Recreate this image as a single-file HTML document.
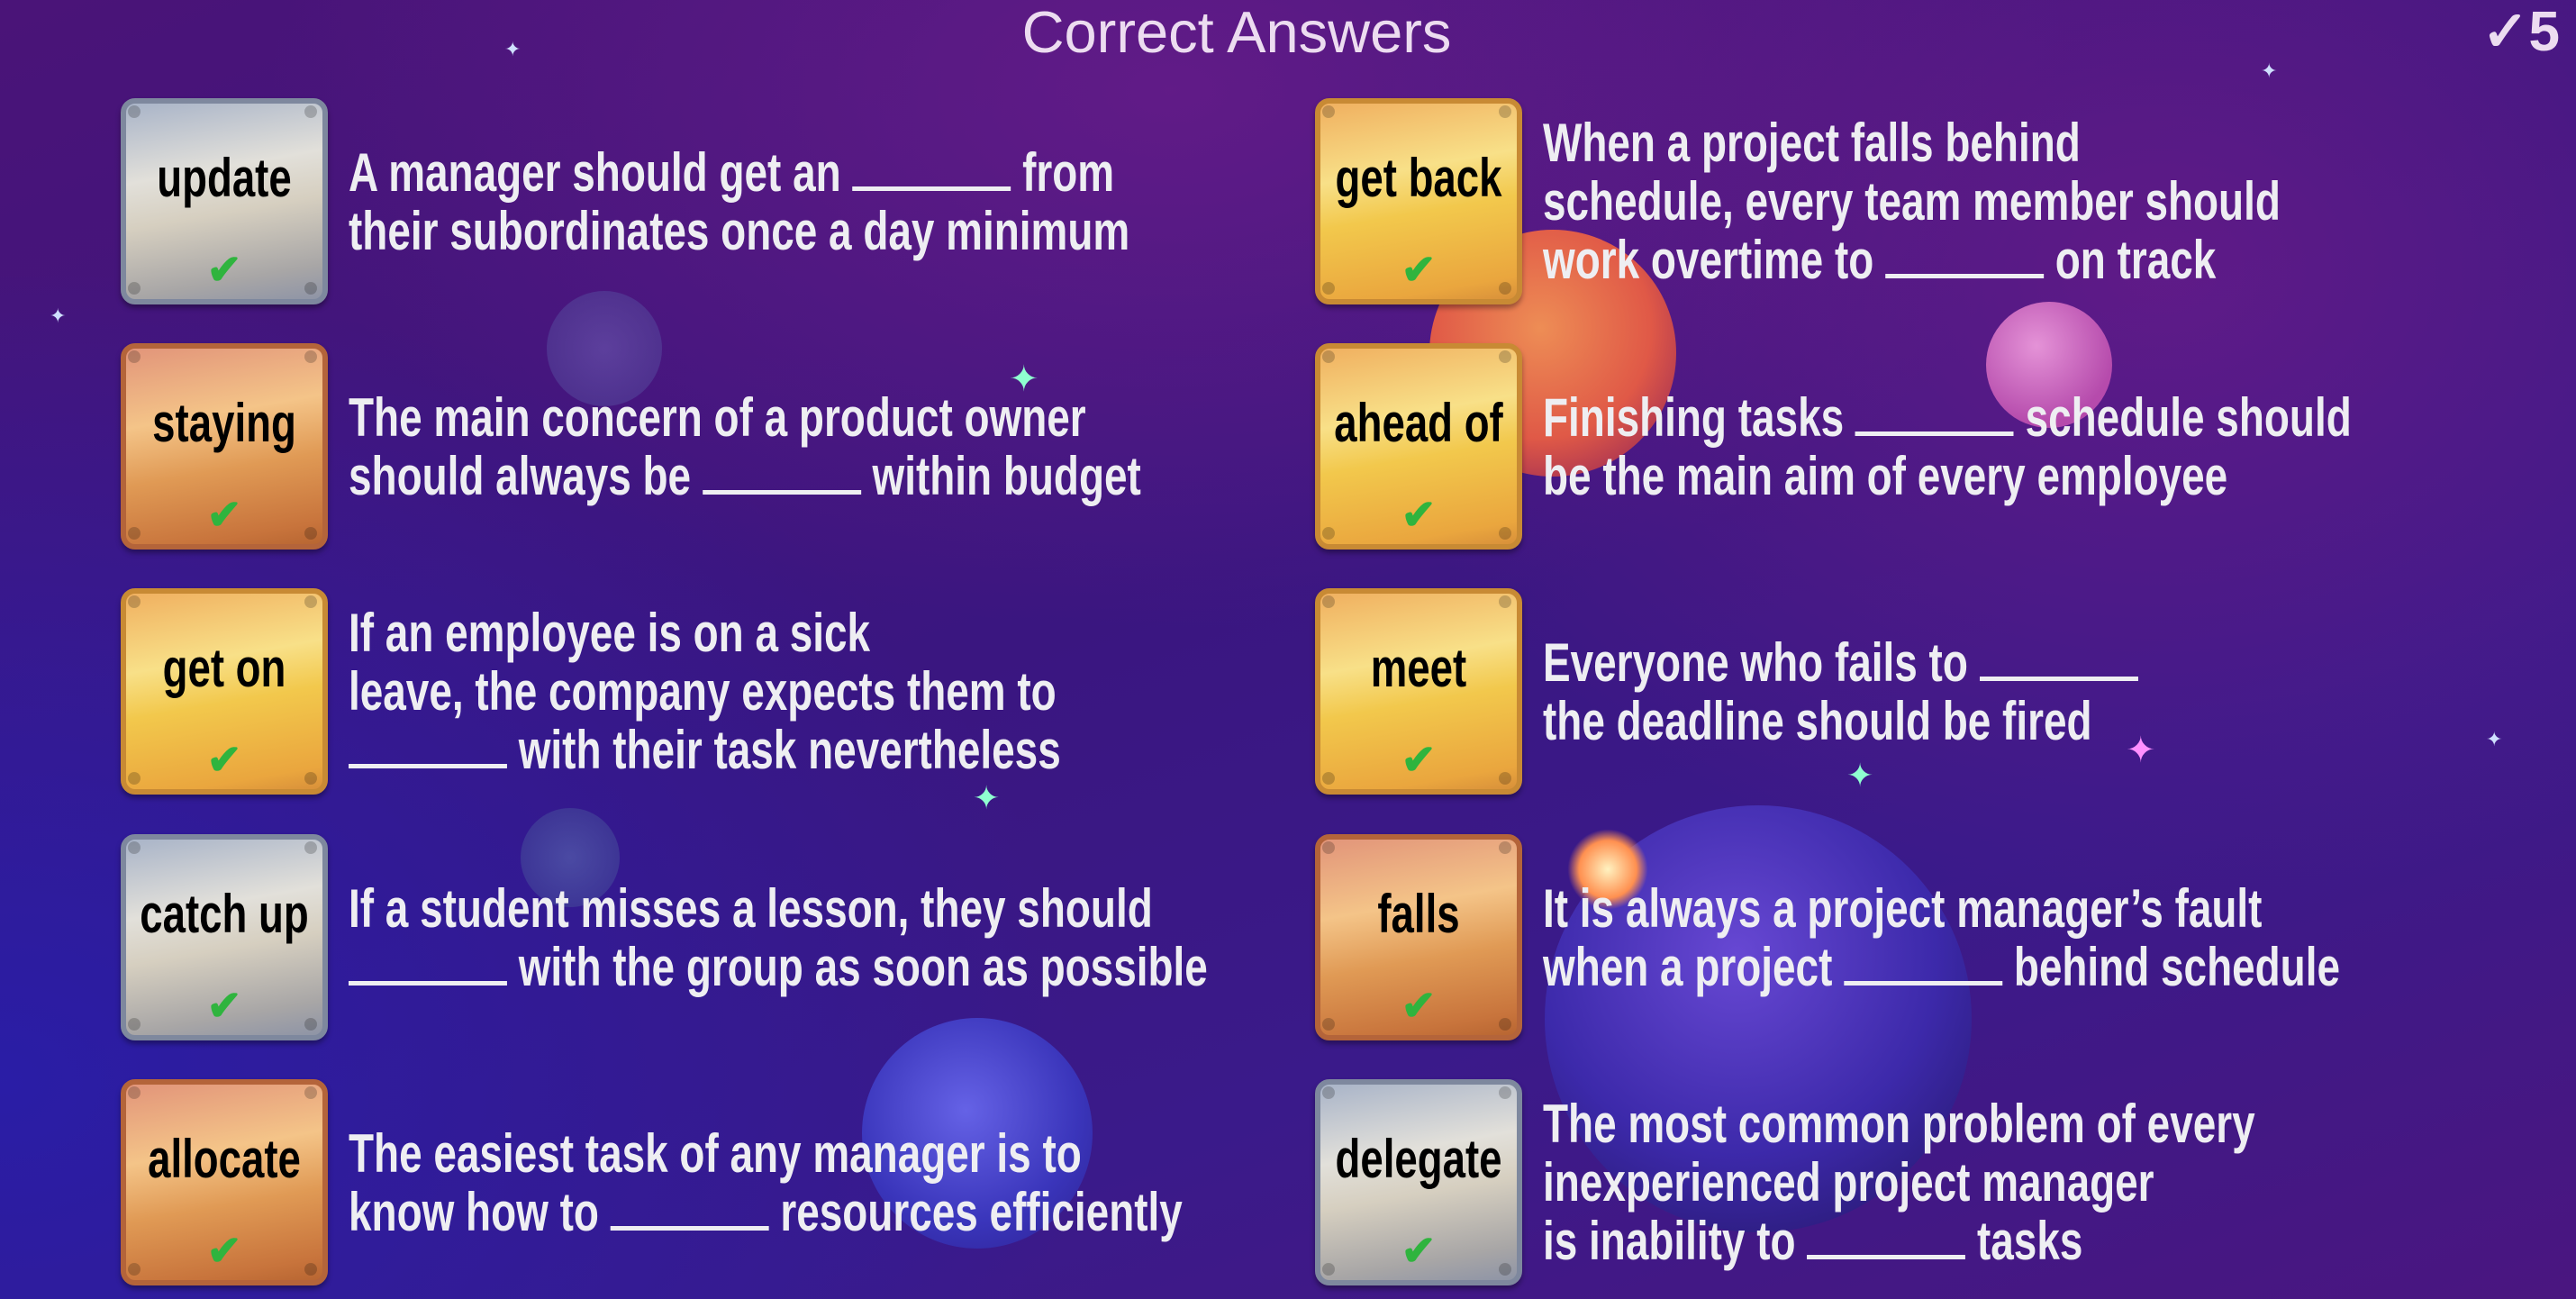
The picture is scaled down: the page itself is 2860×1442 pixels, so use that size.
<!DOCTYPE html>
<html><head><meta charset="utf-8"><style>
*{margin:0;padding:0;box-sizing:border-box}
body{width:2860px;height:1442px;overflow:hidden;position:relative;font-family:"Liberation Sans",sans-serif;
background:
radial-gradient(ellipse 900px 700px at 2400px 300px,rgba(120,30,140,.6),transparent),
radial-gradient(ellipse 1200px 900px at 0px 1200px,rgba(40,30,170,.9),transparent),
radial-gradient(ellipse 1000px 600px at 1300px 100px,rgba(110,30,140,.7),transparent),
linear-gradient(160deg,#4a1478 0%,#3a1680 45%,#3a1a8a 70%,#4a1680 100%);}
.pl{position:absolute;border-radius:50%}
.title{position:absolute;top:-2px;left:0;width:2746px;text-align:center;font-size:65px;color:#ecdcf0}
.score{position:absolute;top:-2px;right:18px;font-size:62px;font-weight:bold;color:#ecdcf0}
.card{position:absolute;width:230px;height:229px;border-radius:16px;border:6px solid;box-shadow:0 4px 6px rgba(0,0,0,.35)}
.card .w{position:absolute;top:48px;left:-40px;right:-40px;text-align:center;font-weight:bold;font-size:60px;color:#000;white-space:nowrap;transform:scaleX(.76)}
.card .c{position:absolute;bottom:10px;left:50%;transform:translateX(-50%);color:#2fb43e;font-size:46px;font-weight:bold;line-height:1}
.card:before{content:"";position:absolute;width:14px;height:14px;border-radius:50%;background:rgba(0,0,0,.2);top:2px;left:2px;box-shadow:196px 0 rgba(0,0,0,.2),0 196px rgba(0,0,0,.2),196px 196px rgba(0,0,0,.2)}
.g{background:linear-gradient(170deg,#a9b4c8 0%,#e2e0da 35%,#d6cfc0 55%,#a8a6a6 85%,#8e94a6 100%);border-color:#7e889e}
.o{background:linear-gradient(170deg,#e2957a 0%,#f4c488 35%,#e09a55 60%,#c8743c 90%,#b86632 100%);border-color:#b4643a}
.y{background:linear-gradient(170deg,#f0b060 0%,#f8e088 35%,#f2c84c 55%,#eaa63e 90%,#d8903a 100%);border-color:#c88a34}
.t{position:absolute;color:#eeeef2;font-weight:bold;font-size:60px;line-height:65px;display:flex;flex-direction:column;justify-content:center;height:229px;white-space:nowrap;transform:scaleX(.765);transform-origin:left center}
.b{display:inline-block;width:230px;border-bottom:5px solid #eeeef2;height:50px;vertical-align:baseline}
.st{position:absolute;color:#cfe0ff;font-size:22px}
</style></head><body>
<div class="pl" style="left:1715px;top:894px;width:474px;height:474px;background:radial-gradient(circle at 45% 35%,#6f50e0,#3c2cb0 55%,#2a1e80 80%);opacity:.85"></div>
<div class="pl" style="left:1587px;top:255px;width:274px;height:274px;background:radial-gradient(circle at 45% 40%,#ff9a50,#f06040 55%,#a02850 90%);opacity:.9"></div>
<div class="pl" style="left:2205px;top:335px;width:140px;height:140px;background:radial-gradient(circle at 40% 35%,#f4a0e0,#c050b0 70%);opacity:.9"></div>
<div class="pl" style="left:957px;top:1130px;width:256px;height:256px;background:radial-gradient(circle at 45% 40%,#6a6af0,#3a38c0 60%,#2a2090);opacity:.9"></div>
<div class="pl" style="left:607px;top:323px;width:128px;height:128px;background:radial-gradient(circle,#6a5ab0,#4a3a90);opacity:.6"></div>
<div class="pl" style="left:578px;top:897px;width:110px;height:110px;background:radial-gradient(circle,#5a6ab0,#3a3a90);opacity:.6"></div>
<div class="pl" style="left:1740px;top:920px;width:90px;height:90px;background:radial-gradient(circle,#fff2c0,#ff9050 50%,transparent 70%)"></div>
<div class="st" style="left:560px;top:42px">✦</div><div class="st" style="left:2510px;top:66px">✦</div><div class="st" style="left:1120px;top:398px;color:#8fffd0;font-size:40px">✦</div>
<div class="st" style="left:2360px;top:810px;color:#ff90ff;font-size:40px">✦</div><div class="st" style="left:2050px;top:840px;color:#8fffd0;font-size:36px">✦</div><div class="st" style="left:1080px;top:865px;color:#8fffd0;font-size:36px">✦</div>
<div class="st" style="left:2760px;top:808px">✦</div><div class="st" style="left:55px;top:338px">✦</div>
<div class="title">Correct Answers</div>
<div class="score">✓5</div>

<div class="card g" style="left:134px;top:109px"><div class="w">update</div><div class="c">✔</div></div>
<div class="t" style="left:387px;top:109px"><div>A manager should get an <span class="b"></span> from</div><div>their subordinates once a day minimum</div></div>
<div class="card o" style="left:134px;top:381px"><div class="w">staying</div><div class="c">✔</div></div>
<div class="t" style="left:387px;top:381px"><div>The main concern of a product owner</div><div>should always be <span class="b"></span> within budget</div></div>
<div class="card y" style="left:134px;top:653px"><div class="w">get on</div><div class="c">✔</div></div>
<div class="t" style="left:387px;top:653px"><div>If an employee is on a sick</div><div>leave, the company expects them to</div><div><span class="b"></span> with their task nevertheless</div></div>
<div class="card g" style="left:134px;top:926px"><div class="w">catch up</div><div class="c">✔</div></div>
<div class="t" style="left:387px;top:926px"><div>If a student misses a lesson, they should</div><div><span class="b"></span> with the group as soon as possible</div></div>
<div class="card o" style="left:134px;top:1198px"><div class="w">allocate</div><div class="c">✔</div></div>
<div class="t" style="left:387px;top:1198px"><div>The easiest task of any manager is to</div><div>know how to <span class="b"></span> resources efficiently</div></div>

<div class="card y" style="left:1460px;top:109px"><div class="w">get back</div><div class="c">✔</div></div>
<div class="t" style="left:1713px;top:109px"><div>When a project falls behind</div><div>schedule, every team member should</div><div>work overtime to <span class="b"></span> on track</div></div>
<div class="card y" style="left:1460px;top:381px"><div class="w">ahead of</div><div class="c">✔</div></div>
<div class="t" style="left:1713px;top:381px"><div>Finishing tasks <span class="b"></span> schedule should</div><div>be the main aim of every employee</div></div>
<div class="card y" style="left:1460px;top:653px"><div class="w">meet</div><div class="c">✔</div></div>
<div class="t" style="left:1713px;top:653px"><div>Everyone who fails to <span class="b"></span></div><div>the deadline should be fired</div></div>
<div class="card o" style="left:1460px;top:926px"><div class="w">falls</div><div class="c">✔</div></div>
<div class="t" style="left:1713px;top:926px"><div>It is always a project manager’s fault</div><div>when a project <span class="b"></span> behind schedule</div></div>
<div class="card g" style="left:1460px;top:1198px"><div class="w">delegate</div><div class="c">✔</div></div>
<div class="t" style="left:1713px;top:1198px"><div>The most common problem of every</div><div>inexperienced project manager</div><div>is inability to <span class="b"></span> tasks</div></div>
</body></html>
